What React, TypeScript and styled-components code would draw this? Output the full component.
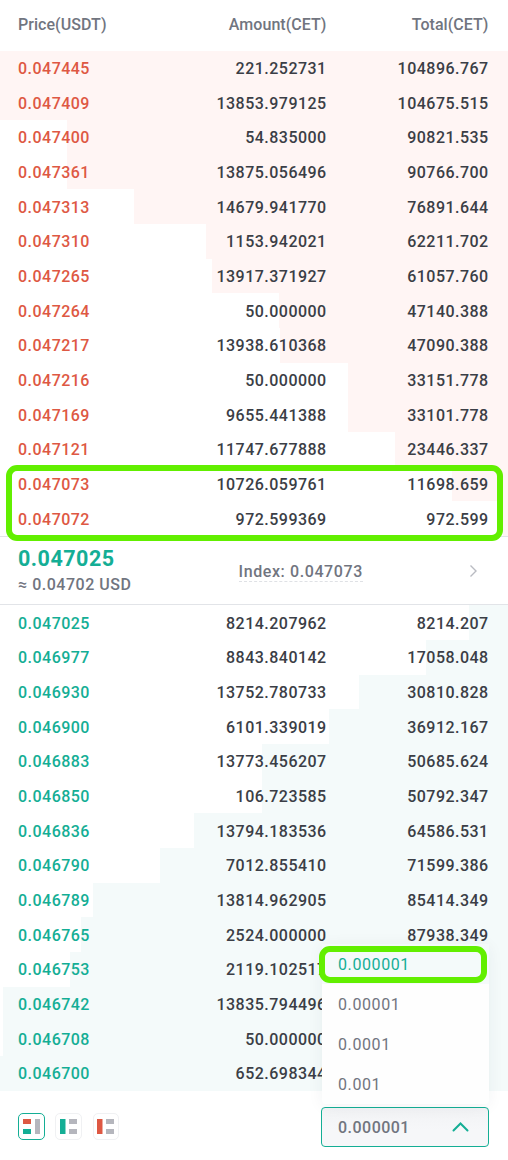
import React from "react";
import styled, { createGlobalStyle } from "styled-components";

const GlobalStyle = createGlobalStyle`
  * { box-sizing: border-box; }
  body { margin: 0; background: #fff; font-family: Roboto, "Liberation Sans", sans-serif; }
`;

const RED = "#de5843";
const GREEN = "#14ae95";
const GRAY = "#71757f";

const Book = styled.main`
  position: relative;
  width: 508px;
  height: 1160px;
  background: #fff;
  overflow: hidden;
  font-size: 16px;
  font-weight: 500;
  letter-spacing: 0.48px;
`;

const HeaderRow = styled.header`
  display: grid;
  grid-template-columns: 148px 160.5px 162px;
  padding: 0 18px;
  height: 50.6px;
  line-height: 50px;
  letter-spacing: 0.05px;
  color: ${GRAY};
`;

const HeaderCell = styled.span<{ $right?: boolean }>`
  text-align: ${(p) => (p.$right ? "right" : "left")};
`;

const Side = styled.section`
  height: 485.5px;
  display: grid;
  grid-template-rows: repeat(14, 1fr);
`;

const Row = styled.div<{ $from: number; $tint: string }>`
  display: grid;
  grid-template-columns: 148px 160.7px 162px;
  align-items: center;
  padding: 1.2px 18px 0;
  background: linear-gradient(${(p) => p.$tint}, ${(p) => p.$tint}) ${(p) => p.$from}px 0 / 508px 100% no-repeat;
`;

const Price = styled.span<{ $color: string }>`
  color: ${(p) => p.$color};
`;

const Num = styled.span`
  text-align: right;
  color: #3b3e46;
`;

const Middle = styled.section`
  display: grid;
  grid-template-columns: 220.5px 1fr 21px;
  align-items: center;
  height: 69.1px;
  padding: 1.4px 18px 0;
  border-top: 1px solid #e2e4e8;
  border-bottom: 1px solid #e2e4e8;
  color: ${GRAY};
`;

const Last = styled.div`
  font-size: 21.5px;
  font-weight: 700;
  line-height: 26px;
  letter-spacing: 0.5px;
  color: ${GREEN};
`;

const Approx = styled.div`
  line-height: 25px;
  letter-spacing: 0.52px;
`;

const Index = styled.span`
  justify-self: start;
  padding-top: 1px;
  line-height: 19px;
  letter-spacing: 0.6px;
  border-bottom: 1px dashed #dfe1e5;
`;

const Footer = styled.footer`
  display: flex;
  align-items: flex-start;
  padding: 16.3px 19px 0 18px;
`;

const LayoutSwitch = styled.div`
  display: grid;
  grid-template-columns: 27px 27px 26px;
  column-gap: 10.4px;
  margin-top: 6px;
`;

const LayoutButton = styled.button<{ $active?: boolean }>`
  display: grid;
  place-items: center;
  height: 27px;
  padding: 0;
  background: #fff;
  border: 1px solid ${(p) => (p.$active ? GREEN : "#f0f1f3")};
  border-radius: 5px;
`;

const SelectBox = styled.div`
  display: flex;
  align-items: center;
  justify-content: space-between;
  width: 168px;
  height: 40px;
  margin-left: auto;
  padding: 1px 19px 0 16px;
  border: 1px solid ${GREEN};
  border-radius: 4px;
  background: linear-gradient(#f2f3f5, #f6f7f9 60%);
  color: ${GRAY};
`;

const Menu = styled.div`
  position: absolute;
  left: 322px;
  top: 944px;
  width: 167px;
  height: 160px;
  background: #fefefe;
  border-radius: 4px;
  box-shadow: 0 2px 16px rgba(40, 55, 65, 0.06);
`;

const Option = styled.div<{ $selected?: boolean }>`
  height: 40px;
  line-height: 41px;
  padding-left: 16px;
  font-weight: 400;
  letter-spacing: 0.6px;
  color: ${(p) => (p.$selected ? GREEN : GRAY)};
  background: ${(p) => (p.$selected ? "#f4fafa" : "transparent")};
`;

const Marker = styled.div<{ $x: number; $y: number; $w: number; $h: number }>`
  position: absolute;
  left: ${(p) => p.$x}px;
  top: ${(p) => p.$y}px;
  width: ${(p) => p.$w}px;
  height: ${(p) => p.$h}px;
  border: 6px solid #62ef00;
  border-radius: 11px;
`;

type Entry = [string, string, string, number];

const asks: Entry[] = [
  ["0.047445", "221.252731", "104896.767", 0],
  ["0.047409", "13853.979125", "104675.515", 0],
  ["0.047400", "54.835000", "90821.535", 67],
  ["0.047361", "13875.056496", "90766.700", 67],
  ["0.047313", "14679.941770", "76891.644", 134],
  ["0.047310", "1153.942021", "62211.702", 206],
  ["0.047265", "13917.371927", "61057.760", 212],
  ["0.047264", "50.000000", "47140.388", 279],
  ["0.047217", "13938.610368", "47090.388", 280],
  ["0.047216", "50.000000", "33151.778", 348],
  ["0.047169", "9655.441388", "33101.778", 348],
  ["0.047121", "11747.677888", "23446.337", 395],
  ["0.047073", "10726.059761", "11698.659", 452],
  ["0.047072", "972.599369", "972.599", 503],
];

const bids: Entry[] = [
  ["0.047025", "8214.207962", "8214.207", 469],
  ["0.046977", "8843.840142", "17058.048", 426],
  ["0.046930", "13752.780733", "30810.828", 359],
  ["0.046900", "6101.339019", "36912.167", 329],
  ["0.046883", "13773.456207", "50685.624", 262],
  ["0.046850", "106.723585", "50792.347", 262],
  ["0.046836", "13794.183536", "64586.531", 194],
  ["0.046790", "7012.855410", "71599.386", 160],
  ["0.046789", "13814.962905", "85414.349", 93],
  ["0.046765", "2524.000000", "87938.349", 81],
  ["0.046753", "2119.102517", "", 70],
  ["0.046742", "13835.794496", "", 3],
  ["0.046708", "50.000000", "", 3],
  ["0.046700", "652.698344", "", 0],
];

function Rows({ items, color, tint }: { items: Entry[]; color: string; tint: string }) {
  return (
    <Side>
      {items.map(([price, amount, total, from]) => (
        <Row key={price} $from={from} $tint={tint}>
          <Price $color={color}>{price}</Price>
          <Num>{amount}</Num>
          <Num>{total}</Num>
        </Row>
      ))}
    </Side>
  );
}

const SplitIcon = () => (
  <svg width="17" height="15" viewBox="0 0 17 15">
    <path fill={RED} d="M0 0h8v5H0z" />
    <path fill={GREEN} d="M0 10h8v5H0z" />
    <path fill="#b5b6bd" d="M12 0h5v15h-5z" />
  </svg>
);

const SingleIcon = ({ color }: { color: string }) => (
  <svg width="17" height="15" viewBox="0 0 17 15">
    <path fill={color} d="M0 0h5.500v15H0z" />
    <path fill="#b5b6bd" d="M9 0h8v5H9zM9 10h8v5H9z" />
  </svg>
);

export default function App() {
  return (
    <>
      <GlobalStyle />
      <Book>
        <HeaderRow>
          <HeaderCell>Price(USDT)</HeaderCell>
          <HeaderCell $right>Amount(CET)</HeaderCell>
          <HeaderCell $right>Total(CET)</HeaderCell>
        </HeaderRow>
        <Rows items={asks} color={RED} tint="#fff5f4" />
        <Middle>
          <div>
            <Last>0.047025</Last>
            <Approx>≈ 0.04702 USD</Approx>
          </div>
          <Index>Index: 0.047073</Index>
          <svg width="10" height="14" viewBox="0 0 10 14" fill="none" stroke="#b9bbc2" strokeWidth="1.4">
            <path d="M1.500 1.500L7 7l-5.500 5.500" />
          </svg>
        </Middle>
        <Rows items={bids} color={GREEN} tint="#f4fafa" />
        <Footer>
          <LayoutSwitch>
            <LayoutButton $active><SplitIcon /></LayoutButton>
            <LayoutButton><SingleIcon color={GREEN} /></LayoutButton>
            <LayoutButton><SingleIcon color={RED} /></LayoutButton>
          </LayoutSwitch>
          <SelectBox>
            0.000001
            <svg width="17" height="10" viewBox="0 0 17 10" fill="none" stroke={GREEN} strokeWidth="2" strokeLinecap="round">
              <path d="M1.500 8.500l7-7 7 7" />
            </svg>
          </SelectBox>
        </Footer>
        <Menu>
          <Option $selected>0.000001</Option>
          <Option>0.00001</Option>
          <Option>0.0001</Option>
          <Option>0.001</Option>
        </Menu>
        <Marker $x={6} $y={465} $w={497} $h={76} />
        <Marker $x={319} $y={946} $w={168} $h={37} />
      </Book>
    </>
  );
}
